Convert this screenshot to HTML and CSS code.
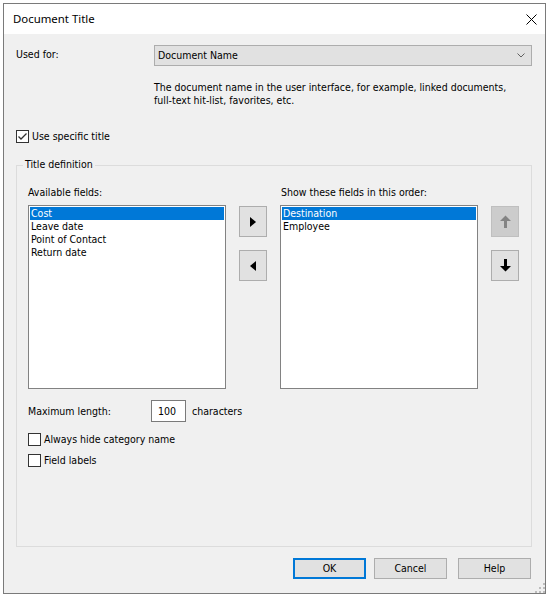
FILE: index.html
```html
<!DOCTYPE html>
<html>
<head>
<meta charset="utf-8">
<title>Document Title</title>
<link rel="stylesheet" href="styles.css">
</head>
<body>
<div class="window">
  <div class="titlebar">
    <span class="title">Document Title</span>
    <svg class="close" width="11" height="11" viewBox="0 0 11 11"><path d="M0.5 0.5L10.5 10.5M10.5 0.5L0.5 10.5" stroke="#000" stroke-width="1" fill="none"/></svg>
  </div>
  <div class="content">
    <div class="used-row">
      <div class="used-label">Used for:</div>
      <div class="used-col">
        <div class="combo">
          <span>Document Name</span>
          <svg class="chev" width="8" height="5" viewBox="0 0 8 5"><path d="M0.5 0.5L4 4L7.5 0.5" fill="none" stroke="#606060" stroke-width="1"/></svg>
        </div>
        <p class="desc">The document name in the user interface, for example, linked documents,<br>full-text hit-list, favorites, etc.</p>
      </div>
    </div>

    <div class="check check-top">
      <span class="box"><svg width="11" height="11" viewBox="0 0 11 11"><path d="M1.5 5.5L4 8L9.5 2.5" fill="none" stroke="#333" stroke-width="1.3"/></svg></span>
      <span class="check-label">Use specific title</span>
    </div>

    <div class="group">
      <div class="legend">Title definition</div>
      <div class="lists">
        <div class="cap cap-left">Available fields:</div>
        <div class="cap cap-right">Show these fields in this order:</div>
        <div class="listbox">
          <div class="item selected">Cost</div>
          <div class="item">Leave date</div>
          <div class="item">Point of Contact</div>
          <div class="item">Return date</div>
        </div>
        <div class="btncol">
          <div class="sqbtn"><svg width="6" height="10" viewBox="0 0 6 10"><polygon points="0,0 6,5 0,10" fill="#000"/></svg></div>
          <div class="sqbtn"><svg width="6" height="10" viewBox="0 0 6 10"><polygon points="6,0 0,5 6,10" fill="#000"/></svg></div>
        </div>
        <div class="listbox">
          <div class="item selected">Destination</div>
          <div class="item">Employee</div>
        </div>
        <div class="btncol">
          <div class="sqbtn disabled"><svg width="11" height="13" viewBox="0 0 11 13"><polygon points="0,6 5.5,0.5 11,6 7,6 7,13 4,13 4,6" fill="#838383"/></svg></div>
          <div class="sqbtn"><svg width="11" height="13" viewBox="0 0 11 13"><polygon points="4,0 7,0 7,7 11,7 5.5,12.5 0,7 4,7" fill="#000"/></svg></div>
        </div>
      </div>

      <div class="maxlen">
        <span class="maxlen-label">Maximum length:</span>
        <span class="numbox">100</span>
        <span class="unit">characters</span>
      </div>

      <div class="check check-1">
        <span class="box"></span>
        <span class="check-label">Always hide category name</span>
      </div>
      <div class="check check-2">
        <span class="box"></span>
        <span class="check-label">Field labels</span>
      </div>
    </div>

    <div class="footer">
      <div class="btn default">OK</div>
      <div class="btn cancel">Cancel</div>
      <div class="btn help">Help</div>
    </div>
  </div>
  <svg class="grip" width="10" height="10" viewBox="0 0 10 10">
    <rect x="8" y="0" width="2" height="2" fill="#bcbcbc"/>
    <rect x="4" y="4" width="2" height="2" fill="#bcbcbc"/>
    <rect x="8" y="4" width="2" height="2" fill="#bcbcbc"/>
    <rect x="0" y="8" width="2" height="2" fill="#bcbcbc"/>
    <rect x="4" y="8" width="2" height="2" fill="#bcbcbc"/>
    <rect x="8" y="8" width="2" height="2" fill="#bcbcbc"/>
  </svg>
</div>
</body>
</html>
```

FILE: styles.css
```css
* { box-sizing: border-box; }

html, body {
  margin: 0;
  padding: 0;
  background: #ffffff;
}

body {
  width: 549px;
  height: 597px;
  overflow: hidden;
}

.window {
  position: relative;
  margin: 3px 0 0 3px;
  width: 543px;
  height: 591px;
  border: 1px solid #7a7a7a;
  display: flex;
  flex-direction: column;
  font-family: "DejaVu Sans Condensed", "Liberation Sans", Arial, sans-serif;
  font-size: 10.5px;
  line-height: 13px;
  color: #000;
}

.titlebar {
  height: 30px;
  flex: 0 0 30px;
  background: #ffffff;
  display: flex;
  align-items: center;
  padding-left: 9px;
}

.title {
  font-family: "Noto Sans", "Open Sans", sans-serif;
  font-size: 11.4px;
  line-height: 16px;
}

.close {
  margin-left: auto;
  margin-right: 8px;
  display: block;
}

.content {
  flex: 1 1 auto;
  background: #f0f0f0;
  padding: 11px 13px 0 12px;
}

.used-row {
  display: grid;
  grid-template-columns: 138px 1fr;
}

.used-label {
  margin-top: 3px;
}

.combo {
  height: 21px;
  background: #e1e1e1;
  border: 1px solid #adadad;
  display: flex;
  align-items: center;
  padding: 0 6px 0 3px;
}

.chev {
  margin-left: auto;
  display: block;
}

.desc {
  margin: 15px 0 0 0;
}

.check {
  display: flex;
  align-items: center;
  height: 13px;
}

.check-top { margin-top: 23px; }

.box {
  width: 13px;
  height: 13px;
  flex: 0 0 13px;
  border: 1px solid #333333;
  background: #ffffff;
  display: flex;
  align-items: center;
  justify-content: center;
}

.box svg { display: block; }

.check-label {
  margin-left: 3px;
}

.group {
  margin-top: 22px;
  border: 1px solid #dcdcdc;
  padding: 0 11px 79px 11px;
}

.legend {
  width: fit-content;
  margin: -8px 0 0 -5px;
  padding: 0 2px;
  background: #f0f0f0;
}

.lists {
  margin-top: 15px;
  display: grid;
  grid-template-columns: 198px 28px 198px 28px;
  grid-template-rows: 13px 184px;
  column-gap: 13px;
  row-gap: 6px;
}

.cap-left { grid-column: 1; grid-row: 1; }
.cap-right { grid-column: 3; grid-row: 1; padding-left: 1px; }

.listbox {
  grid-row: 2;
  background: #ffffff;
  border: 1px solid #828282;
  padding: 1px;
}

.item {
  height: 13px;
  padding-left: 1px;
  white-space: nowrap;
}

.item.selected {
  background: #0078d7;
  color: #ffffff;
}

.btncol {
  grid-row: 2;
  padding-top: 1px;
  display: flex;
  flex-direction: column;
  gap: 13px;
}

.sqbtn {
  width: 28px;
  height: 31px;
  background: #e1e1e1;
  border: 1px solid #adadad;
  display: flex;
  align-items: center;
  justify-content: center;
}

.sqbtn svg { display: block; }

.sqbtn.disabled {
  background: #cccccc;
  border-color: #bfbfbf;
}

.maxlen {
  margin-top: 11px;
  display: flex;
  align-items: center;
  height: 22px;
}

.maxlen-label {
  width: 123px;
}

.numbox {
  width: 35px;
  height: 22px;
  background: #ffffff;
  border: 1px solid #7a7a7a;
  padding-left: 6px;
  display: flex;
  align-items: center;
}

.unit {
  margin-left: 6px;
}

.check-1 { margin-top: 11px; }
.check-2 { margin-top: 8px; }

.footer {
  margin-top: 11px;
  display: flex;
  justify-content: flex-end;
  padding-right: 1px;
}

.btn {
  width: 73px;
  height: 21px;
  background: #e1e1e1;
  border: 1px solid #adadad;
  display: flex;
  align-items: center;
  justify-content: center;
}

.btn.default {
  border: 2px solid #0078d7;
}

.btn.cancel { margin-left: 8px; }
.btn.help { margin-left: 11px; }

.grip {
  position: absolute;
  right: 0;
  bottom: 0;
  display: block;
}
```
